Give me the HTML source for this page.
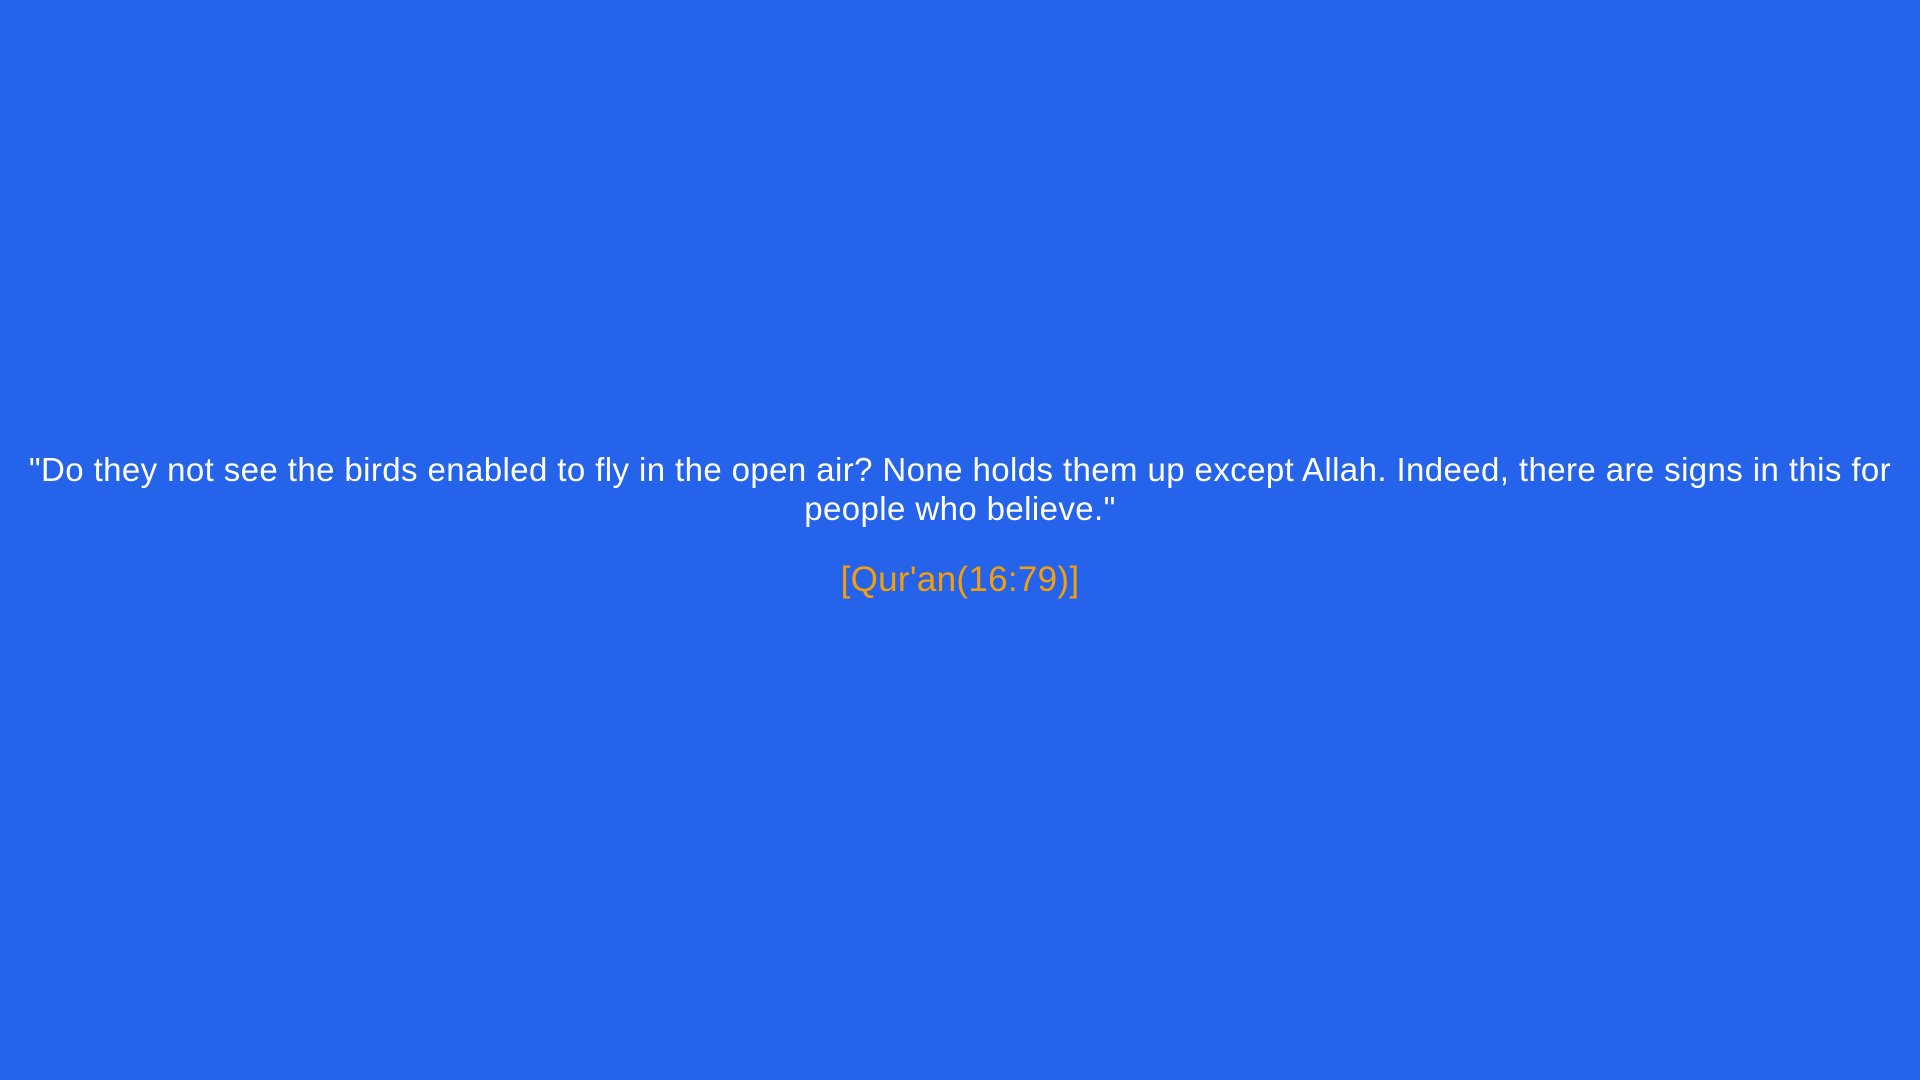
<!DOCTYPE html>
<html><head><meta charset="utf-8"><style>
html,body{margin:0;padding:0;width:1920px;height:1080px;background:#2563eb;overflow:hidden}
body{font-family:"Liberation Sans",sans-serif;text-align:center}
.q{position:absolute;left:0;width:1920px;top:450px;color:#fff;font-size:33px;line-height:39px;letter-spacing:0.4px;white-space:nowrap}
.c{position:absolute;left:0;width:1920px;top:559px;color:#f59e0b;font-size:35px;line-height:42px;letter-spacing:0.3px}
</style></head><body>
<div class="q">"Do they not see the birds enabled to fly in the open air? None holds them up except Allah. Indeed, there are signs in this for<br>people who believe."</div>
<div class="c">[Qur'an(16:79)]</div>
</body></html>
